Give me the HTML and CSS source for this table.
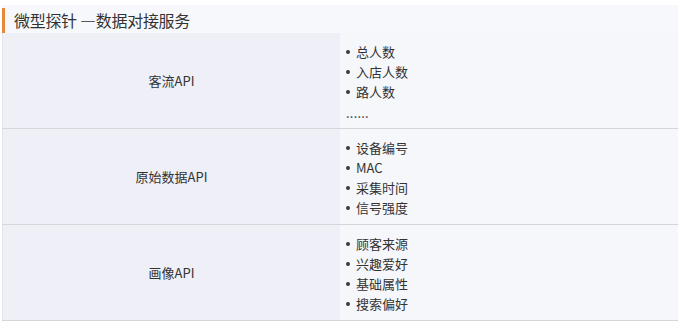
FILE: index.html
```html
<!DOCTYPE html>
<html lang="zh-CN">
<head>
<meta charset="utf-8">
<link rel="stylesheet" href="styles.css">
</head>
<body>
<div class="panel">
  <h2 class="title">微型探针 —数据对接服务</h2>
  <div class="table">
    <div class="row">
      <div class="label">客流API</div>
      <div class="items">
        <ul>
          <li>总人数</li>
          <li>入店人数</li>
          <li>路人数</li>
        </ul>
        <div class="more">......</div>
      </div>
    </div>
    <div class="row">
      <div class="label">原始数据API</div>
      <div class="items">
        <ul>
          <li>设备编号</li>
          <li>MAC</li>
          <li>采集时间</li>
          <li>信号强度</li>
        </ul>
      </div>
    </div>
    <div class="row">
      <div class="label">画像API</div>
      <div class="items">
        <ul>
          <li>顾客来源</li>
          <li>兴趣爱好</li>
          <li>基础属性</li>
          <li>搜索偏好</li>
        </ul>
      </div>
    </div>
  </div>
</div>
</body>
</html>
```
FILE: styles.css
```css
html, body {
  margin: 0;
  padding: 0;
  background: #ffffff;
}
body {
  font-family: "Noto Sans CJK SC", "Microsoft YaHei", sans-serif;
  color: #333333;
}
.panel {
  margin: 5px 7px 0 2px;
  background: #f7f8fb;
  padding-top: 3px;
}
.title {
  margin: 0;
  border-left: 3px solid #e9883a;
  padding-left: 9px;
  height: 25px;
  line-height: 24px;
  font-size: 16px;
  font-weight: normal;
  letter-spacing: -0.3px;
  color: #333333;
}
.table {
  display: flex;
  flex-direction: column;
}
.row {
  display: grid;
  grid-template-columns: 338px 1fr;
  border-bottom: 1px solid #d5d6dc;
  height: 95px;
}
.label {
  background: #eeeff7;
  display: flex;
  align-items: center;
  justify-content: center;
  font-size: 13px;
  border-left: 1px solid #e4e5ee;
}
.items {
  background: #f6f7fb;
  padding: 9px 0 0 6px;
  font-size: 13px;
  line-height: 20px;
}
.items ul {
  margin: 0;
  padding: 0;
  list-style: none;
}
.items li {
  display: flex;
  align-items: center;
  gap: 6px;
}
.items li::before {
  content: "";
  width: 4px;
  height: 4px;
  border-radius: 50%;
  background: #3a3a3a;
  flex: none;
}
.more {
  letter-spacing: 0.2px;
  line-height: 22px;
}
```
